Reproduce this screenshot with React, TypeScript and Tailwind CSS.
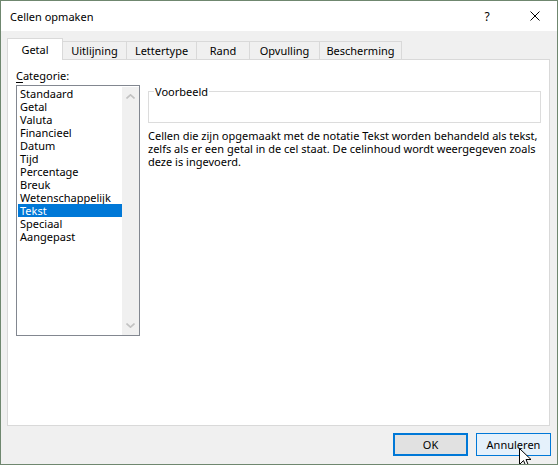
import React from "react";

const items = [
  "Standaard",
  "Getal",
  "Valuta",
  "Financieel",
  "Datum",
  "Tijd",
  "Percentage",
  "Breuk",
  "Wetenschappelijk",
  "Tekst",
  "Speciaal",
  "Aangepast",
];

const tabs = [
  { label: "Uitlijning", w: "w-[64px]" },
  { label: "Lettertype", w: "w-[70px]" },
  { label: "Rand", w: "w-[53px]" },
  { label: "Opvulling", w: "w-[70px]" },
  { label: "Bescherming", w: "w-[82px]" },
];

export default function App() {
  return (
    <div className="relative w-[558px] h-[465px] overflow-hidden border border-[#6f876f] bg-[#f0f0f0] flex flex-col font-['Noto_Sans',sans-serif] text-[11px] leading-[15px] text-black">
      {/* Title bar */}
      <div className="h-[30px] bg-white flex items-center pl-[9px]">
        <span className="flex-1 text-[11px]">Cellen opmaken</span>
        <span className="w-[12px] text-center text-[12px] mr-[37px]">?</span>
        <svg width="10" height="10" viewBox="0 0 10 10" className="mr-[17px]">
          <path d="M0.5 0.5 L9.5 9.5 M9.5 0.5 L0.5 9.5" stroke="#000" strokeWidth="1" />
        </svg>
      </div>

      {/* Body */}
      <div className="flex-1 flex flex-col pt-[7px]">
        {/* Tabs */}
        <div className="h-[21px] flex items-end ml-[6px]">
          <div className="relative z-10 h-[22px] mb-[-1px] w-[56px] bg-white border-l border-t border-r border-[#d9d9d9] flex items-center justify-center">
            Getal
          </div>
          {tabs.map((t) => (
            <div
              key={t.label}
              className={`${t.w} h-[19px] mb-[-1px] bg-[#f0f0f0] border-t border-r border-b border-[#d9d9d9] flex items-center justify-center`}
            >
              {t.label}
            </div>
          ))}
        </div>

        {/* Panel */}
        <div className="ml-[6px] w-[543px] h-[367px] bg-white border border-[#d9d9d9] px-[8px] pt-[8px] flex gap-[8px]">
          {/* Left column */}
          <div className="flex flex-col">
            <div>
              <span className="underline underline-offset-[2px]">C</span>ategorie:
            </div>
            <div className="mt-[2px] w-[124px] h-[251px] border border-[#828790] flex pt-[1px] pl-[1px]">
              <div className="w-[104px] flex flex-col leading-[13px]">
                {items.map((it) =>
                  it === "Tekst" ? (
                    <div key={it} className="h-[13px] bg-[#0078d7] text-white pl-[2px]">
                      {it}
                    </div>
                  ) : (
                    <div key={it} className="h-[13px] pl-[2px]">
                      {it}
                    </div>
                  )
                )}
              </div>
              <div className="w-[17px] h-[248px] bg-[#f0f0f0] flex flex-col justify-between items-center py-[7px]">
                <svg width="9" height="5" viewBox="0 0 9 5">
                  <path d="M0.5 4.5 L4.5 0.8 L8.5 4.5" fill="none" stroke="#c2c2c2" strokeWidth="1.6" />
                </svg>
                <svg width="9" height="5" viewBox="0 0 9 5">
                  <path d="M0.5 0.5 L4.5 4.2 L8.5 0.5" fill="none" stroke="#c2c2c2" strokeWidth="1.6" />
                </svg>
              </div>
            </div>
          </div>

          {/* Right column */}
          <div className="w-[393px] flex flex-col">
            <fieldset className="mt-[16px] h-[39px] border border-[#dcdcdc] px-[5px]">
              <legend className="px-[1px] leading-[15px]">Voorbeeld</legend>
            </fieldset>
            <div className="mt-[6px] leading-[13px] whitespace-nowrap">
              <div>Cellen die zijn opgemaakt met de notatie Tekst worden behandeld als tekst,</div>
              <div>zelfs als er een getal in de cel staat. De celinhoud wordt weergegeven zoals</div>
              <div>deze is ingevoerd.</div>
            </div>
          </div>
        </div>

        {/* Buttons */}
        <div className="mt-[7px] flex justify-end gap-[8px] pr-[6px]">
          <button className="w-[75px] h-[23px] bg-[#e1e1e1] border-2 border-[#0078d7] flex items-center justify-center">
            OK
          </button>
          <button className="w-[75px] h-[23px] bg-[#e5f1fb] border border-[#0078d7] flex items-center justify-center">
            Annuleren
          </button>
        </div>
      </div>

      {/* Mouse cursor */}
      <svg
        className="absolute left-[518px] top-[447px]"
        width="13"
        height="20"
        viewBox="0 0 13 20"
      >
        <path
          d="M0.5 0.5 L0.5 16.5 L4.5 12.5 L7 18.5 L9.5 17.5 L7 11.5 L12 11.5 Z"
          fill="#fff"
          stroke="#000"
          strokeWidth="1"
        />
      </svg>
    </div>
  );
}
